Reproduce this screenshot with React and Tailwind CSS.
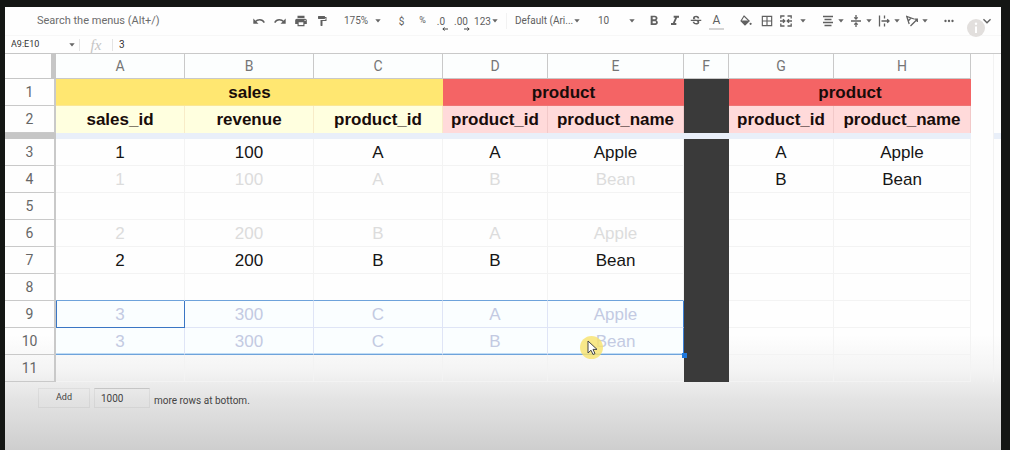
import React from "react";
import {
  MdPrint,
  MdFormatPaint,
  MdFormatBold,
  MdFormatItalic,
  MdStrikethroughS,
  MdBorderAll,
  MdMoreHoriz,
  MdExpandMore,
} from "react-icons/md";

const COLUMNS = ["A", "B", "C", "D", "E", "F", "G", "H"];

const ROWS = [
  { n: 3, cells: ["1", "100", "A", "A", "Apple", null, "A", "Apple"] },
  { n: 4, cells: ["1", "100", "A", "B", "Bean", null, "B", "Bean"], faded: true },
  { n: 5, cells: ["", "", "", "", "", null, "", ""] },
  { n: 6, cells: ["2", "200", "B", "A", "Apple", null, "", ""], faded: true },
  { n: 7, cells: ["2", "200", "B", "B", "Bean", null, "", ""] },
  { n: 8, cells: ["", "", "", "", "", null, "", ""] },
  { n: 9, cells: ["3", "300", "C", "A", "Apple", null, "", ""], selected: true },
  { n: 10, cells: ["3", "300", "C", "B", "Bean", null, "", ""], selected: true },
  { n: 11, cells: ["", "", "", "", "", null, "", ""] },
];

function Caret({ className = "" }) {
  return (
    <svg viewBox="0 0 6 4" className={`h-1 w-1.5 shrink-0 ${className}`} aria-hidden="true">
      <path d="M0.3 0.3h5.4L3 3.4z" fill="#666" />
    </svg>
  );
}

function Tool({ label, children, className = "w-[21px]" }) {
  return (
    <button
      type="button"
      aria-label={label}
      className={`relative flex h-5 shrink-0 items-center justify-center ${className}`}
    >
      {children}
    </button>
  );
}

function Dropdown({ label, value, className }) {
  return (
    <div className={`grid shrink-0 items-center ${className}`}>
      <select
        aria-label={label}
        className="col-start-1 row-start-1 h-5 w-full appearance-none bg-transparent text-[10px] leading-5 outline-none"
      >
        <option>{value}</option>
      </select>
      <Caret className="pointer-events-none col-start-1 row-start-1 justify-self-end" />
    </div>
  );
}

function DecimalArrow({ right }) {
  return (
    <svg viewBox="0 0 6 4" className="absolute right-0 bottom-0 h-1 w-1.5" aria-hidden="true">
      <path
        d={right ? "M0 2h5M3.4 0.5L5.2 2L3.4 3.5" : "M6 2H1M2.6 0.5L0.8 2L2.6 3.5"}
        fill="none"
        stroke="#444"
        strokeWidth="1"
      />
    </svg>
  );
}

function Glyph({ d }) {
  return (
    <svg viewBox="0 0 12 12" className="size-3 shrink-0" aria-hidden="true">
      <path d={d} fill="none" stroke="currentColor" strokeWidth="1.3" />
    </svg>
  );
}

function Turn({ flip }) {
  return (
    <svg viewBox="0 0 12 8" className={`h-2 w-3 ${flip ? "-scale-x-100" : ""}`} aria-hidden="true">
      <path d="M0.3 1.5v5.3h5.2z" fill="currentColor" />
      <path d="M2.2 4.8C4.6 2.2 9.2 1.8 11.3 5.6" fill="none" stroke="currentColor" strokeWidth="1.4" />
    </svg>
  );
}

function Bucket() {
  return (
    <svg viewBox="0 0 12 12" className="size-3" aria-hidden="true">
      <path d="M4 1l5.2 5L5 10L1 6z" fill="none" stroke="currentColor" strokeWidth="1.1" />
      <path d="M1 5.6h8.2L5 10z" fill="currentColor" />
      <circle cx="10.6" cy="8.8" r="1.1" fill="currentColor" />
    </svg>
  );
}

function Toolbar() {
  return (
    <div className="flex h-[29px] items-center border-b border-[#f7f7f7] pl-8 text-[10px] text-[#606060]">
      <input
        aria-label="Search the menus"
        placeholder="Search the menus (Alt+/)"
        className="w-[211px] shrink-0 bg-transparent text-[11px] outline-none placeholder:text-[#6c6c6c]"
      />
      <Tool label="Undo">
        <Turn />
      </Tool>
      <Tool label="Redo">
        <Turn flip />
      </Tool>
      <Tool label="Print">
        <MdPrint className="size-3.5" />
      </Tool>
      <Tool label="Paint format">
        <MdFormatPaint className="size-3" />
      </Tool>
      <Dropdown label="Zoom" value="175%" className="ml-3 w-[37px]" />
      <Tool label="Format as currency" className="ml-2.5 w-[21px]">
        $
      </Tool>
      <Tool label="Format as percent">
        <span className="text-[9px]">%</span>
      </Tool>
      <Tool label="Decrease decimal places" className="ml-px w-[14px]">
        .0
        <DecimalArrow />
      </Tool>
      <Tool label="Increase decimal places" className="ml-1 w-[18px]">
        .00
        <DecimalArrow right />
      </Tool>
      <Tool label="More formats" className="ml-1 w-[24px] gap-px">
        123
        <Caret />
      </Tool>
      <span className="ml-2 h-4 w-px bg-[#f2f2f2]" />
      <Dropdown label="Font" value="Default (Ari..." className="ml-2 w-[65px]" />
      <Dropdown label="Font size" value="10" className="ml-[18px] w-[37px]" />
      <Tool label="Bold" className="ml-2 w-[21px]">
        <MdFormatBold className="size-4" />
      </Tool>
      <Tool label="Italic">
        <MdFormatItalic className="size-4" />
      </Tool>
      <Tool label="Strikethrough">
        <MdStrikethroughS className="size-3.5" />
      </Tool>
      <Tool label="Text color">
        <span className="border-b-2 border-[#d4d4d4] px-1 text-[12px] leading-4">A</span>
      </Tool>
      <Tool label="Fill color" className="ml-2 w-[21px]">
        <Bucket />
      </Tool>
      <Tool label="Borders">
        <MdBorderAll className="size-3.5" />
      </Tool>
      <Tool label="Merge cells" className="w-8 gap-2">
        <Glyph d="M4.5 1H0.8V3.5M7.5 1h3.7V3.5M4.5 11H0.8V8.5M7.5 11h3.7V8.5M0 6h4.6M3 4.3L4.8 6L3 7.7M12 6H7.4M9 4.3L7.2 6L9 7.7" />
        <Caret />
      </Tool>
      <Tool label="Horizontal align" className="ml-3 w-6 gap-1">
        <Glyph d="M1 1.5h10M2.5 4.5h7M1 7.5h10M2.5 10.5h7" />
        <Caret />
      </Tool>
      <Tool label="Vertical align" className="ml-1 w-6 gap-1">
        <Glyph d="M1 6h10M6 0v3.8M4.3 2.4L6 4.1L7.7 2.4M6 12V8.2M4.3 9.6L6 7.9L7.7 9.6" />
        <Caret />
      </Tool>
      <Tool label="Text wrapping" className="ml-1 w-6 gap-1">
        <Glyph d="M1.5 0.5v11M6.5 0.5v3M6.5 8.5v3M3.5 6h7.5M9.2 4.2L11 6L9.2 7.8" />
        <Caret />
      </Tool>
      <Tool label="Text rotation" className="ml-1 w-6 gap-1">
        <Glyph d="M3.2 9L0.8 1.5L8 4M2.2 6L5 3M4.5 11L11 4.5M8.4 4.2h2.9v2.9" />
        <Caret />
      </Tool>
      <Tool label="More" className="ml-2 w-6">
        <MdMoreHoriz className="size-3.5" />
      </Tool>
      <Tool label="Hide the menus" className="mr-1 ml-auto w-5">
        <MdExpandMore className="size-4" />
      </Tool>
    </div>
  );
}

function FormulaBar() {
  return (
    <div className="flex h-[17px] items-center pl-1.5 text-[10px] text-[#333]">
      <input
        aria-label="Name box"
        defaultValue="A9:E10"
        className="w-[58px] shrink-0 bg-transparent text-[9px] outline-none"
      />
      <Caret />
      <span className="ml-1 h-3 w-px bg-[#e4e4e4]" />
      <span className="w-8 text-center font-['Liberation_Serif',serif] text-[15px] leading-4 text-[#c4c4c4] italic">
        fx
      </span>
      <span className="h-3 w-px bg-[#e4e4e4]" />
      <input aria-label="Formula" defaultValue="3" className="ml-1.5 grow bg-transparent outline-none" />
    </div>
  );
}

function RowHeader({ n }) {
  return (
    <th
      scope="row"
      className="border-r-2 border-b border-[#c9c9c9] p-0 text-center font-['Roboto',sans-serif] text-[14px] leading-5 font-normal text-[#666]"
    >
      {n}
    </th>
  );
}

function cellClass(row, i) {
  if (i === 5) return "bg-[#3a3a3a]";
  let c = "border-r border-b ";
  if (row.n === 8 && i < 5) return c + "border-r-[#f3f3f3] border-b-[#6ea3db]";
  if (row.selected && i < 5) {
    c += "bg-[#fafeff] text-[#c3cae2] ";
    if (row.n === 9 && i === 0) return c + "border-[#3a76c4] shadow-[inset_1px_0_0_#3a76c4]";
    if (row.n === 10) c += "border-b-[#6ea3db] shadow-[inset_0_-1px_0_#c0dcf5] ";
    else c += "border-b-[#dfe5f6] ";
    return c + (i === 4 ? "border-r-[#3a7fd5]" : "border-r-[#dfe5f6]");
  }
  c += "border-[#f3f3f3] ";
  return c + (row.faded && i < 5 ? "text-[#dcdcdc]" : "text-[#151515]");
}

function Pointer() {
  return (
    <span className="absolute top-2 left-8 flex size-[23px] items-center justify-center rounded-full bg-[#f7e26b]/80">
      <svg viewBox="0 0 12 16" className="h-4 w-3" aria-hidden="true">
        <path
          d="M2 1v12l3-2.8 2 4.3 2-.9-2-4.2h4z"
          fill="#fff"
          stroke="#444"
          strokeWidth="1"
        />
      </svg>
    </span>
  );
}

function Sheet() {
  const title = "p-0 pt-px text-center text-[17px] leading-5 font-bold text-[#180c0a]";
  return (
    <table className="w-[966px] shrink-0 table-fixed border-separate border-spacing-0 font-['Liberation_Sans',Arial,sans-serif]">
      <colgroup>
        <col className="w-[51px]" />
        <col className="w-[129px]" />
        <col className="w-[129px]" />
        <col className="w-[129px]" />
        <col className="w-[105px]" />
        <col className="w-[136px]" />
        <col className="w-[45px]" />
        <col className="w-[105px]" />
        <col className="w-[137px]" />
      </colgroup>
      <thead>
        <tr className="h-[26px]">
          <td className="border-t border-r-[5px] border-b border-[#c6c6c6] p-0" />
          {COLUMNS.map((c) => (
            <th
              key={c}
              scope="col"
              className="border-t border-r border-b border-[#c9c9c9] bg-[#fcfefe] p-0 text-center font-['Roboto',sans-serif] text-[14px] leading-5 font-normal text-[#757575]"
            >
              {c}
            </th>
          ))}
        </tr>
      </thead>
      <tbody>
        <tr className="h-[27px]">
          <RowHeader n={1} />
          <td colSpan={3} className={`${title} border-b border-[#fbe795] bg-[#ffe771]`}>
            sales
          </td>
          <td colSpan={2} className={`${title} border-b border-[#ee7474] bg-[#f46465]`}>
            product
          </td>
          <td className="bg-[#3a3a3a]" />
          <td colSpan={2} className={`${title} border-b border-[#ee7474] bg-[#f46465]`}>
            product
          </td>
        </tr>
        <tr className="h-[27px]">
          <RowHeader n={2} />
          {["sales_id", "revenue", "product_id"].map((t) => (
            <td key={t} className={`${title} border-r border-[#f8ecc8] bg-[#ffffdf]`}>
              {t}
            </td>
          ))}
          {["product_id", "product_name"].map((t) => (
            <td key={t} className={`${title} border-r border-[#f2c9c9] bg-[#ffdada]`}>
              {t}
            </td>
          ))}
          <td className="bg-[#3a3a3a]" />
          {["product_id", "product_name"].map((t) => (
            <td key={t} className={`${title} border-r border-[#f2c9c9] bg-[#ffdada]`}>
              {t}
            </td>
          ))}
        </tr>
        <tr className="h-1.5" aria-hidden="true">
          <td className="bg-[#c6c6c6] p-0" />
          <td colSpan={8} className="bg-[#e9eff9] p-0" />
        </tr>
        {ROWS.map((row) => (
          <tr key={row.n} className="h-[27px]">
            <RowHeader n={row.n} />
            {row.cells.map((v, i) => (
              <td
                key={i}
                className={`relative p-0 pt-0.5 text-center text-[17px] leading-5 ${
                  cellClass(row, i)
                }`}
              >
                {v}
                {row.n === 10 && i === 4 && (
                  <>
                    <Pointer />
                    <span className="absolute -right-1 -bottom-1 z-10 size-[5px] bg-[#1f78dc]" />
                  </>
                )}
              </td>
            ))}
          </tr>
        ))}
      </tbody>
    </table>
  );
}

function AddRows() {
  return (
    <form className="flex h-8 items-center pl-[33px] text-[10px] text-[#444]">
      <button type="button" className="h-5 w-[52px] border border-black/5 text-[9px]">
        Add
      </button>
      <input
        id="row-count"
        defaultValue="1000"
        className="ml-1 h-5 w-[56px] border border-black/5 border-t-black/15 bg-transparent px-1.5 text-[10px] outline-none"
      />
      <label htmlFor="row-count" className="ml-1 pt-1">
        more rows at bottom.
      </label>
    </form>
  );
}

export default function App() {
  return (
    <div className="flex min-h-screen bg-[#141614] pt-[7px] pr-[9px] pl-[5px] font-['Roboto',sans-serif]">
      <main className="relative min-w-0 grow overflow-hidden bg-[linear-gradient(to_top,#cecece,#e3e3e3_50px,#f4f4f4_80px,#fefefe_115px)]">
        <Toolbar />
        <FormulaBar />
        <div className="flex">
          <Sheet />
          <div className="flex grow justify-end border-t border-[#c9c9c9]">
            <div className="w-2 border-l border-[#f2f2f2] pt-[79px]">
              <div className="h-1.5 bg-[#e9eff9]" />
            </div>
          </div>
        </div>
        <AddRows />
        <button
          type="button"
          aria-label="Information"
          className="absolute top-3 right-4 flex size-[18px] items-center justify-center rounded-full bg-[#e2dfdd]"
        >
          <svg viewBox="0 0 18 18" className="size-[18px]" aria-hidden="true">
            <circle cx="9" cy="4.8" r="1.2" fill="#fff" />
            <path d="M9 7.5v6.5" stroke="#fff" strokeWidth="2" />
          </svg>
        </button>
      </main>
    </div>
  );
}
